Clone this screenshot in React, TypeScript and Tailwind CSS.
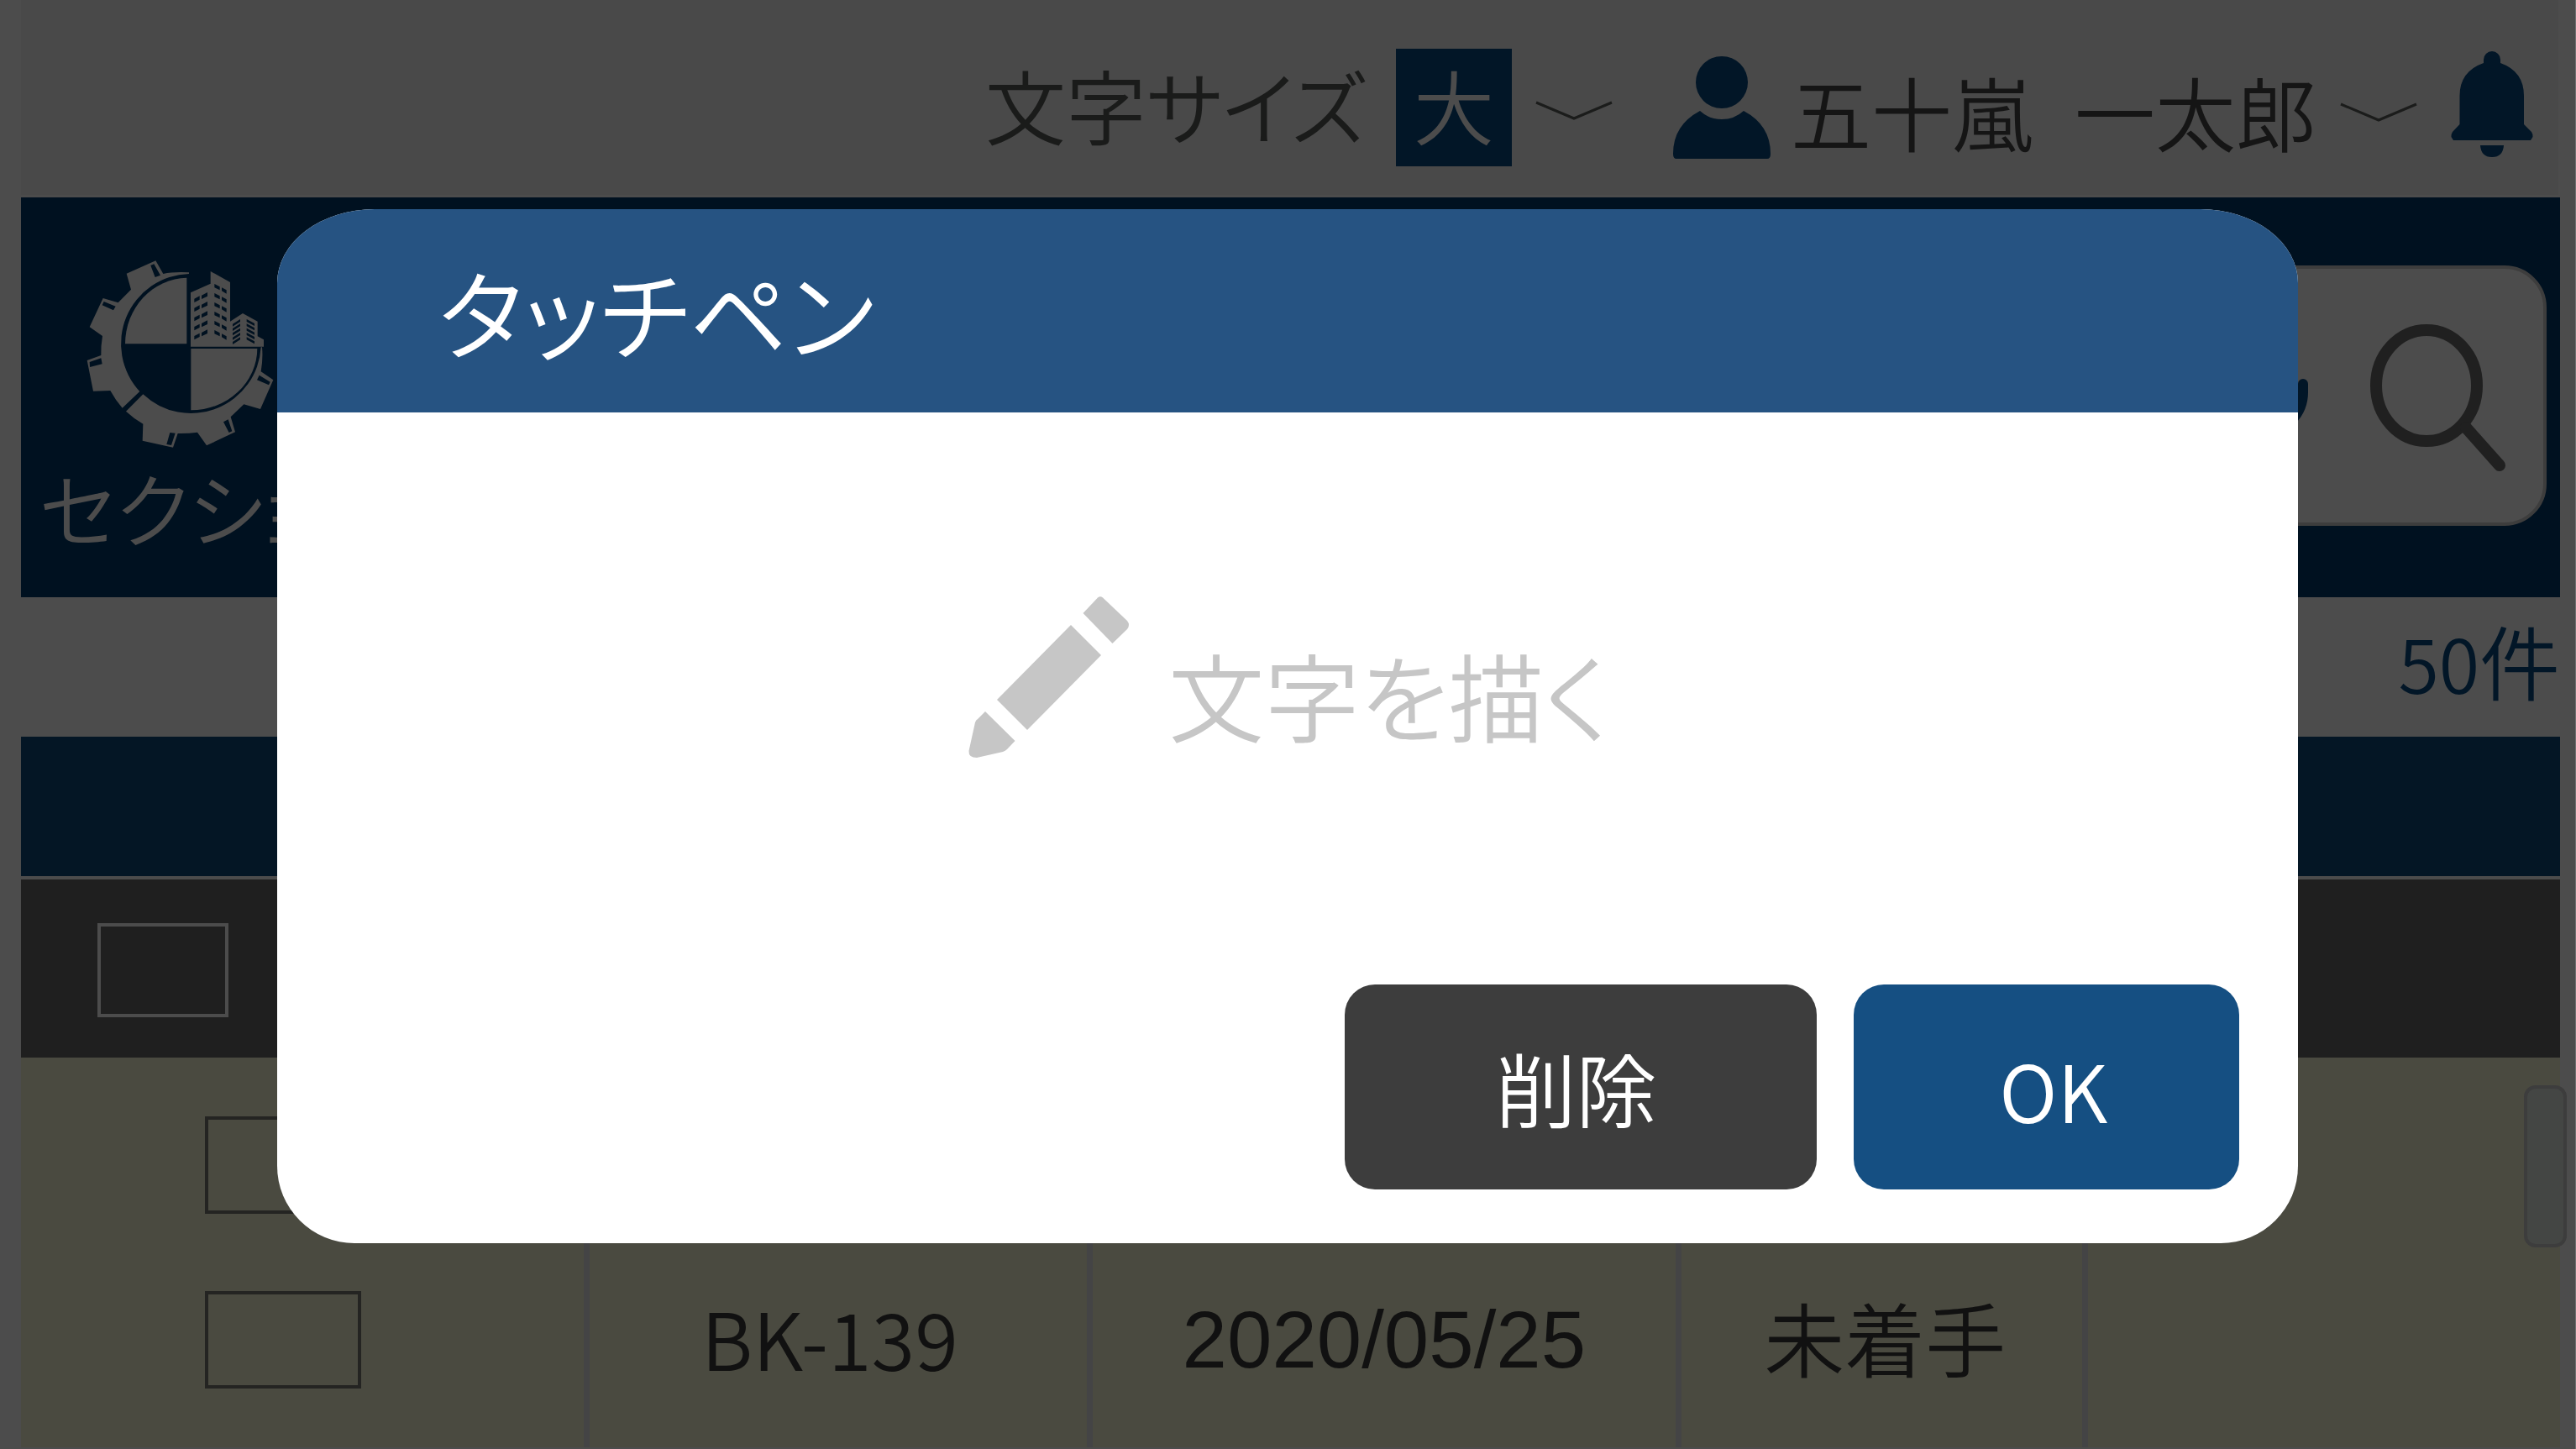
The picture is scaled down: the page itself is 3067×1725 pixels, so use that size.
import React from "react";

const BUILDING_LEFT = [0, 33, 67, 100, 133];
const BUILDING_RIGHT = [0, 33, 66, 99, 132, 165];
const ANNEX = [0, 16, 32, 48, 64];

function GearLogo() {
  return (
    <svg viewBox="309 270 669 669" className="block h-[223px] w-[223px]" aria-hidden="true">
      <g fill="#4c4c4c">
        <path d="M675 313Q620 310 583 318L556 271L452 317L468 374L422 421L368 405L320 508L366 540Q360 575 361 609L311 627L333 737L394 735Q413 770 437 797L499 738A250 250 0 0 1 675 318Z" />
        <path d="M511 748L450 809Q478 835 511 854L509 914L618 938L635 888Q670 889 705 884L738 931L840 883L824 829L871 784L930 801L976 697L932 667Q940 620 936 580L932 580A250 250 0 0 1 511 748Z" />
        <path d="M447 568A225 237 0 0 1 667 332V568Z" />
        <path d="M682 585H919A237 221 0 0 1 682 805Z" />
        <path d="M681 385L752 353V309L822 348V488L867 459L920 488V541L942 553V578H681Z" />
      </g>
      <g fill="#001120">
        <path d="M538 288L550 283L573 323L554 330ZM371 417L413 434L405 448L365 430ZM320 633L361 619L365 640L321 651Z" />
        <path d="M607 885L626 887L612 930L595 927ZM798 847L815 838L829 880L818 885ZM926 680L965 704L960 715L918 697Z" />
        {BUILDING_LEFT.map((d) => (
          <path key={d} transform={`translate(0 ${d})`} d="M694 407L713 397V410L694 420ZM720 395L741 384V398L720 408Z" />
        ))}
        {BUILDING_RIGHT.map((d) => (
          <path key={d} transform={`translate(0 ${d})`} d="M766 354L785 364V376L766 367ZM792 367L809 376V389L792 379Z" />
        ))}
        {ANNEX.map((d) => (
          <path key={d} transform={`translate(0 ${d})`} d="M831 497L858 480V489L831 506ZM881 480L909 495V504L881 489Z" />
        ))}
      </g>
    </svg>
  );
}

function Chevron() {
  return (
    <svg viewBox="0 0 92 24" className="h-6 w-[92px] shrink-0" fill="none" stroke="#1b1c1b" strokeWidth="3" aria-hidden="true">
      <path d="M1 2L46 21L91 2" />
    </svg>
  );
}

function PersonIcon() {
  return (
    <svg viewBox="0 0 116 122" className="h-[122px] w-[116px] shrink-0" fill="#021627" aria-hidden="true">
      <circle cx="58" cy="31" r="31" />
      <path d="M32 65Q43 75 58 75T84 65Q116 82 116 116Q116 122 112 122H4Q0 122 0 116Q0 82 32 65Z" />
    </svg>
  );
}

function BellIcon() {
  return (
    <svg viewBox="0 0 98 126" className="h-[126px] w-[98px] shrink-0" fill="#021627" aria-hidden="true">
      <path d="M39 14V10A10 10 0 0 1 59 10V14Q87 24 87 53V87L96 96Q98 99 97.500 102L95 106H3L0.500 102Q0 99 2 96L10.500 87V53Q10.500 24 39 14Z" />
      <path d="M35 112H63Q62 126 49 126T35 112Z" />
    </svg>
  );
}

function PencilIcon() {
  return (
    <svg viewBox="3 0 192 192" className="h-48 w-48 shrink-0" fill="#c6c6c6" aria-hidden="true">
      <path d="M139.500 20L157 1.500Q160 -1 163 1.500L192 29Q196 34 192 39L174.500 56Z" />
      <path d="M125 34L161 70L73 159L37 123Z" />
      <path d="M23 137L58.500 172L49 182Q47 184 44 185L13 192Q3 192 3.500 184L11 150Q12 147 14 146Z" />
    </svg>
  );
}

function MicIcon() {
  return (
    <svg viewBox="0 0 100 160" className="h-40 w-[100px]" fill="none" stroke="#021627" strokeWidth="12" strokeLinecap="round" aria-hidden="true">
      <rect x="30" y="6" width="40" height="86" rx="20" />
      <path d="M6 62V72A44 46 0 0 0 94 72V62M50 118V150M26 152H74" />
    </svg>
  );
}

function SearchIcon() {
  return (
    <svg viewBox="0 0 162 178" className="h-[178px] w-[162px]" fill="none" stroke="#202020" strokeWidth="14" strokeLinecap="round" aria-hidden="true">
      <ellipse cx="67" cy="73" rx="60" ry="66" />
      <path d="M114 123L154 168" />
    </svg>
  );
}

function Topbar() {
  return (
    <header className="mr-[2px] flex h-[232px] items-center justify-end bg-[#494949] pr-[30px] pt-6 text-[96px] leading-[140px] text-[#1a1b1a]">
      <label htmlFor="text-size" className="mr-9 pb-2 [font-feature-settings:'palt']">文字サイズ</label>
      <div className="flex items-center gap-7">
        <select
          id="text-size"
          defaultValue="大"
          className="h-[140px] w-[138px] appearance-none bg-[#021627] pb-2 pl-[21px] text-[96px] leading-[132px] text-[#4c4c4c]"
        >
          <option>大</option>
          <option>中</option>
          <option>小</option>
        </select>
        <span className="pt-2"><Chevron /></span>
      </div>
      <button type="button" className="ml-[72px] flex items-center gap-6 text-[#151515]">
        <PersonIcon />
        <span className="flex items-center gap-7">
          <span className="flex gap-[50px] pt-2">
            <span>五十嵐</span>
            <span>一太郎</span>
          </span>
          <span className="pt-3"><Chevron /></span>
        </span>
      </button>
      <button type="button" aria-label="通知" className="ml-10 pb-2">
        <BellIcon />
      </button>
    </header>
  );
}

function Navbar() {
  return (
    <nav className="mt-[3px] flex h-[476px] items-start bg-[#001120] pr-4">
      <a href="#section" className="flex w-[640px] shrink-0 flex-col pl-[22px] pt-[75px] text-[96px] leading-[140px] text-[#4c4c4c]">
        <span className="pl-14"><GearLogo /></span>
        <span className="[font-feature-settings:'palt']">セクション</span>
      </a>
      <form className="mt-[81px] flex h-[310px] flex-1 items-center justify-end gap-[74px] rounded-[50px] border-4 border-[#3d3d3d] bg-[#4c4c4c] pr-11 pt-2">
        <button type="button" aria-label="音声入力"><MicIcon /></button>
        <button type="submit" aria-label="検索"><SearchIcon /></button>
      </form>
    </nav>
  );
}

const box = "block appearance-none border-4";
const divider = "border-r-[7px] border-[#444445]";

function TaskTable() {
  return (
    <table className="w-full table-fixed border-separate border-spacing-0 text-center text-[96px] leading-[140px] text-[#111111]">
      <colgroup>
        <col className="w-[22.4%]" />
        <col className="w-[19.8%]" />
        <col className="w-[23.2%]" />
        <col className="w-[16%]" />
        <col />
      </colgroup>
      <thead>
        <tr className="h-[212px] bg-[#1f1f1f]">
          <th colSpan={5} className="pl-[91px] pt-1">
            <input type="checkbox" aria-label="すべて選択" className={`${box} h-[112px] w-[156px] border-[#4c4c4c]`} />
          </th>
        </tr>
      </thead>
      <tbody className="bg-[#4a4a40]">
        <tr className="h-[232px]">
          <td className={`${divider} pl-[219px] pt-6`}>
            <input type="checkbox" aria-label="行を選択" className={`${box} h-[116px] w-[186px] border-[#242422]`} />
          </td>
          <td className={divider} />
          <td className={divider} />
          <td className={divider} />
          <td />
        </tr>
        <tr className="h-[232px]">
          <td className={`${divider} pb-6 pl-[219px]`}>
            <input type="checkbox" aria-label="BK-139を選択" className={`${box} h-[116px] w-[186px] border-[#242422]`} />
          </td>
          <td className={`${divider} pb-8 pr-5 text-[94px]`}>BK-139</td>
          <td className={`${divider} pb-6 font-['Liberation_Sans',sans-serif]`}>2020/05/25</td>
          <td className={`${divider} pb-8 pl-2`}>未着手</td>
          <td />
        </tr>
      </tbody>
    </table>
  );
}

function TouchPenDialog() {
  return (
    <div className="absolute inset-0 flex items-start justify-center pt-[249px]">
      <section
        role="dialog"
        aria-modal="true"
        aria-labelledby="dialog-title"
        className="w-[78.5%] overflow-hidden rounded-b-[92px] rounded-t-[116px_88px] bg-white"
      >
        <h1
          id="dialog-title"
          className="h-[242px] bg-[#265382] pl-[192px] pt-10 text-[116px] leading-[160px] text-white [font-feature-settings:'palt']"
        >
          タッチペン
        </h1>
        <div className="flex h-[681px] items-start justify-center gap-[46px] pl-1 pt-[219px]">
          <PencilIcon />
          <p className="pt-9 text-[114px] leading-[160px] text-[#c6c6c6] [font-feature-settings:'palt']">文字を描く</p>
        </div>
        <div className="flex justify-end gap-11 pb-16 pr-[70px] text-[96px] leading-[140px] text-white">
          <button type="button" className="h-[244px] w-[562px] rounded-[36px] bg-[#3d3d3d] pr-3">削除</button>
          <button type="button" className="h-[244px] w-[459px] rounded-[36px] bg-[#154f82] pl-4 pt-1 text-[94px]">OK</button>
        </div>
      </section>
    </div>
  );
}

export default function App() {
  return (
    <div className="relative min-h-screen overflow-hidden border-r border-[#707070] bg-[#4c4c4c] pl-[25px] pr-[18px] font-['Noto_Sans_CJK_JP',sans-serif] font-[350]">
      <Topbar />
      <Navbar />
      <main className="relative">
        <p className="h-[166px] pt-1 text-right text-[96px] leading-[140px] text-[#021627]">
          <span className="text-[88px]">50</span>件
        </p>
        <div className="mb-1 h-[166px] bg-[#041625]" />
        <TaskTable />
        <div className="absolute -right-2 top-[581px] h-[193px] w-[51px] rounded-[14px] border-4 border-[#3d3d3d] bg-[#444644]" />
      </main>
      <TouchPenDialog />
    </div>
  );
}
